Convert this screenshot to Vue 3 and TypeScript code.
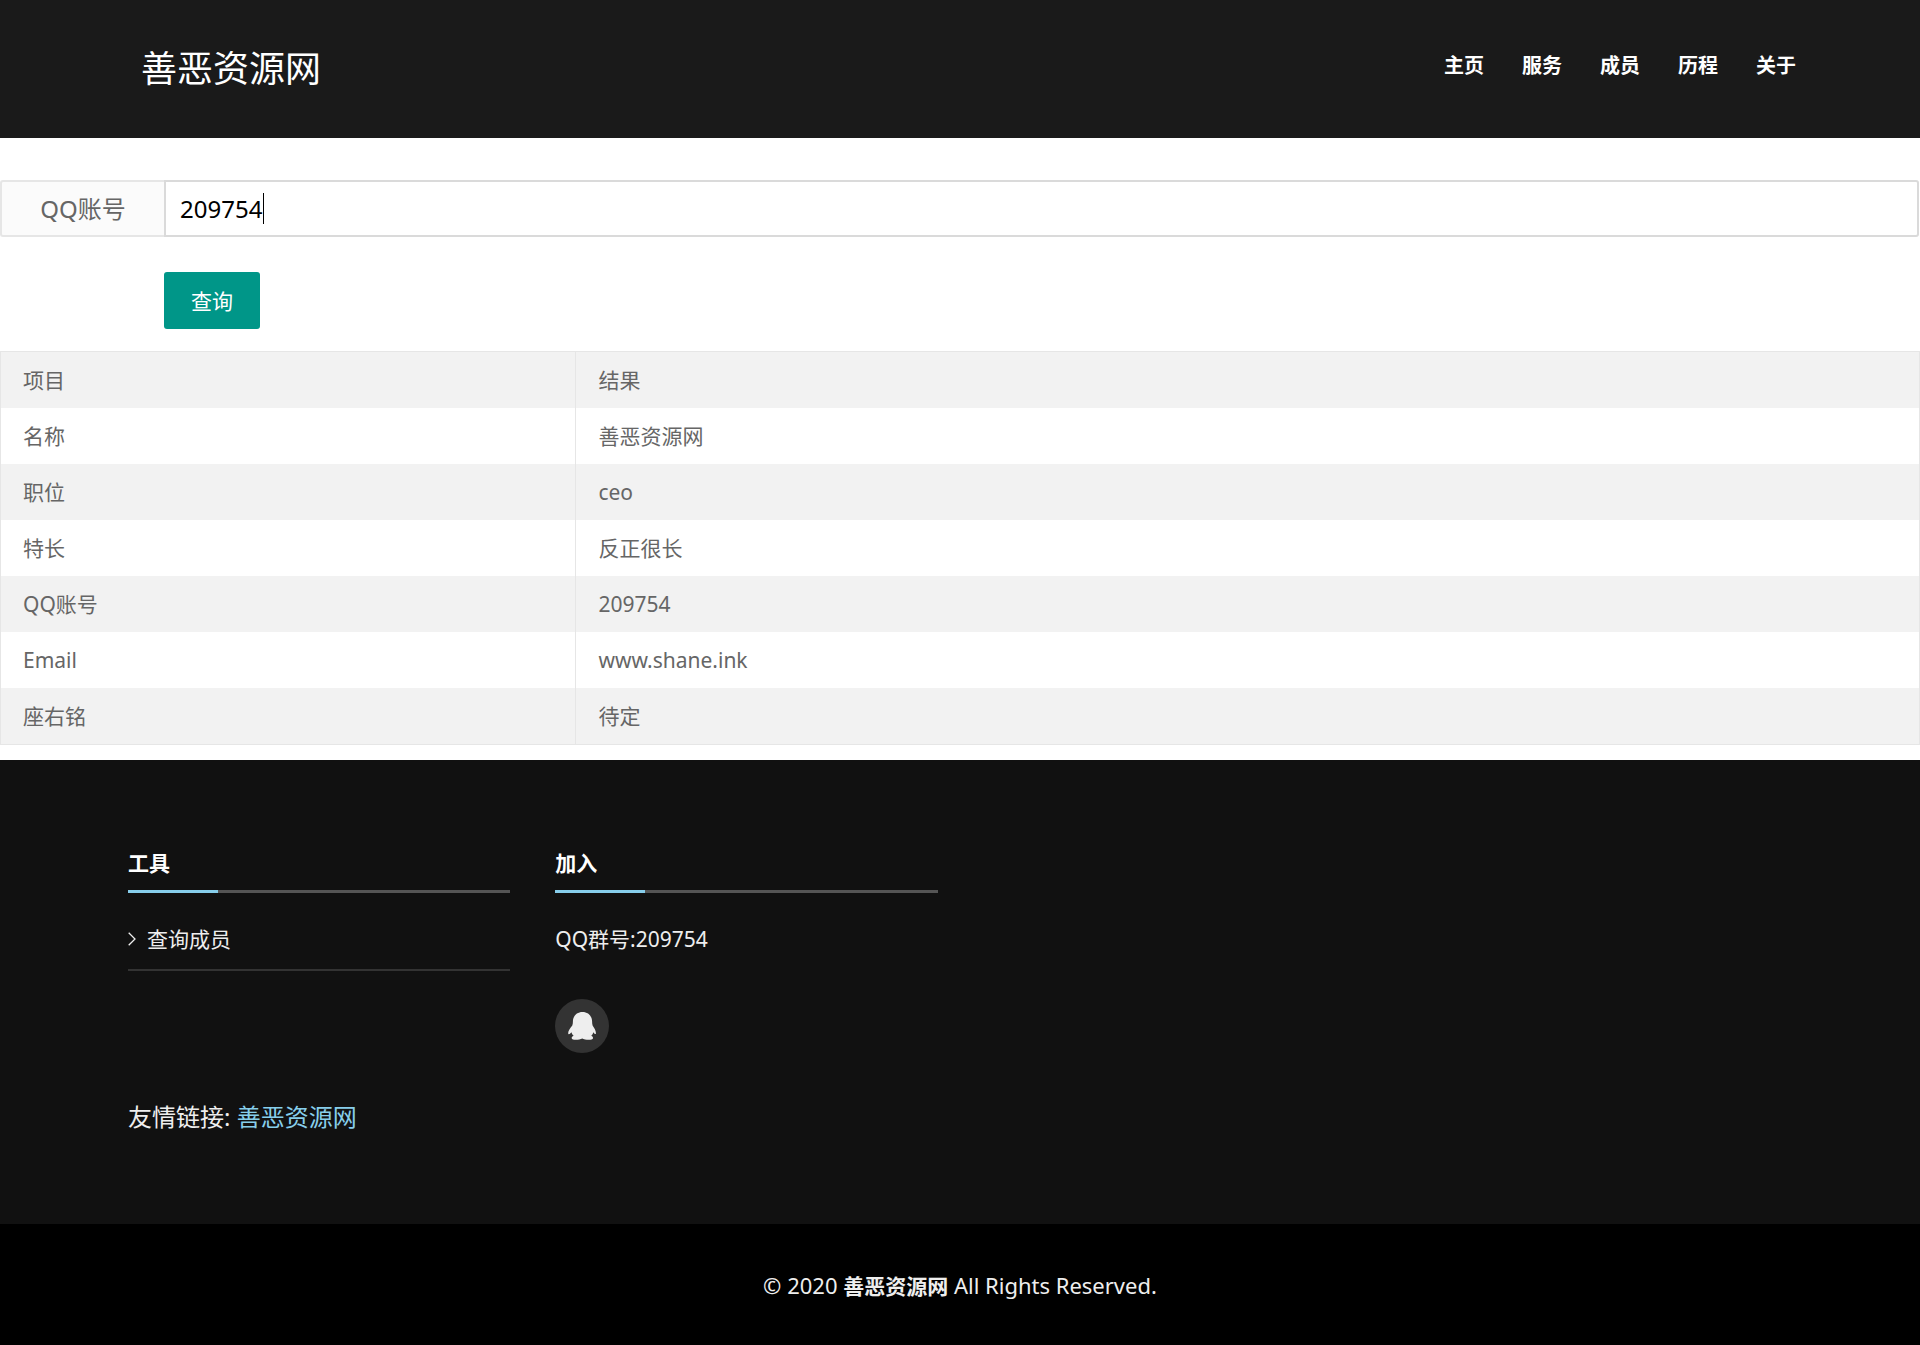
<script setup lang="ts">
import { computed, onMounted, ref } from 'vue'

interface Row {
  label: string
  value: string
}

const siteName = '善恶资源网'
const navItems: string[] = ['主页', '服务', '成员', '历程', '关于']
const initialAccount = '209754'
const account = ref(initialAccount)
const focused = ref(false)
const accountInput = ref<HTMLInputElement | null>(null)
const showCaret = computed(() => focused.value && account.value === initialAccount)

const rows: Row[] = [
  { label: '名称', value: '善恶资源网' },
  { label: '职位', value: 'ceo' },
  { label: '特长', value: '反正很长' },
  { label: 'QQ账号', value: '209754' },
  { label: 'Email', value: 'www.shane.ink' },
  { label: '座右铭', value: '待定' },
]

onMounted(() => {
  const el = accountInput.value
  if (!el) return
  el.focus()
  el.setSelectionRange(el.value.length, el.value.length)
})
</script>

<template>
  <div class="page">
    <header class="header">
      <div class="header-inner">
        <h1 class="brand"><a href="#">{{ siteName }}</a></h1>
        <nav class="nav">
          <a v-for="item in navItems" :key="item" href="#">{{ item }}</a>
        </nav>
      </div>
    </header>

    <main>
      <form class="search" @submit.prevent>
        <div class="field">
          <label for="account">QQ账号</label>
          <div class="control">
            <input
              id="account"
              ref="accountInput"
              v-model="account"
              :class="{ still: showCaret }"
              type="text"
              autocomplete="off"
              @focus="focused = true"
              @blur="focused = false"
            />
            <span v-if="showCaret" class="caret" aria-hidden="true"></span>
          </div>
        </div>
        <button type="submit">查询</button>
      </form>

      <table class="result">
        <thead>
          <tr>
            <th scope="col" class="key">项目</th>
            <th scope="col">结果</th>
          </tr>
        </thead>
        <tbody>
          <tr v-for="row in rows" :key="row.label">
            <td class="key">{{ row.label }}</td>
            <td>{{ row.value }}</td>
          </tr>
        </tbody>
      </table>
    </main>

    <footer class="footer">
      <div class="footer-inner">
        <div class="columns">
          <section>
            <h2>工具</h2>
            <ul class="tools">
              <li>
                <a href="#">
                  <svg width="8" height="14" viewBox="0 0 8 14" aria-hidden="true">
                    <path d="M0.7 0.7 7 7 0.7 13.3" fill="none" stroke="currentColor" stroke-width="1.3" />
                  </svg>
                  <span>查询成员</span>
                </a>
              </li>
            </ul>
          </section>
          <section>
            <h2>加入</h2>
            <p class="group">QQ群号:209754</p>
            <a class="qq" href="#" aria-label="QQ">
              <svg width="28" height="28" viewBox="0 0 28 28" aria-hidden="true">
                <path
                  fill="currentColor"
                  d="M14.5 0C9 0 5 3.8 4.9 9.5C4.9 11 4.8 12.2 4.3 13.4C2 16 0 19 .2 21.4C.4 23 2 22 3.4 20.2C3.8 21.6 4.5 22.8 5.6 23.8C4.2 24.3 3.6 25.2 3.7 26.2C4 28.5 11.5 28 14.2 26.4C16.8 28 24.6 28.5 25 26.2C25.1 25.2 24.6 24.4 23.3 23.8C24.3 22.8 25 21.6 25.4 20.2C26.6 22 27.7 22.8 27.9 21.4C28.1 19 26.4 16 24.6 13.4C24.2 12.2 24.1 11 24.1 9.5C24 3.8 20 0 14.5 0Z"
                />
              </svg>
            </a>
          </section>
        </div>
        <p class="friends">友情链接: <a href="#">{{ siteName }}</a></p>
      </div>
    </footer>
    <div class="copyright">© 2020 <strong>{{ siteName }}</strong> All Rights Reserved.</div>
  </div>
</template>

<style>
body {
  margin: 0;
  background: #fff;
}
</style>

<style scoped>
.page {
  font-family: "Noto Sans", "Noto Sans CJK SC", sans-serif;
  font-size: 21px;
  line-height: 32px;
  color: #666;
}

.page a {
  color: inherit;
  text-decoration: none;
}

h1,
h2,
p,
ul {
  margin: 0;
  padding: 0;
}

.header {
  background: #1a1a1a;
  color: #fff;
}

.header-inner {
  display: flex;
  justify-content: space-between;
  align-items: flex-start;
  max-width: 1655px;
  margin: 0 auto;
  padding: 42px 19px 42px 36px;
}

.brand {
  font-size: 36px;
  font-weight: 400;
  line-height: 54px;
}

.nav {
  display: flex;
  gap: 38px;
  font-size: 20px;
  font-weight: 700;
  line-height: 48px;
}

.search {
  padding: 42px 1px 22px 0;
}

.field {
  display: flex;
  height: 57px;
  margin-bottom: 35px;
}

.field label {
  box-sizing: border-box;
  width: 164px;
  border: 2px solid #e6e6e6;
  border-right: 0;
  border-radius: 3px 0 0 3px;
  background: #fbfbfb;
  font-size: 24px;
  line-height: 53px;
  text-align: center;
}

.control {
  position: relative;
  display: flex;
  flex: 1;
  min-width: 0;
}

.control input {
  box-sizing: border-box;
  flex: 1;
  min-width: 0;
  border: 2px solid #dadada;
  border-radius: 0 3px 3px 0;
  padding: 0 14px;
  outline: 0;
  background: #fff;
  color: #000;
  font-family: inherit;
  font-size: 24px;
}

.control input.still {
  caret-color: transparent;
}

.caret {
  position: absolute;
  top: 13px;
  left: 99px;
  width: 1px;
  height: 31px;
  background: #000;
}

.search button {
  display: block;
  width: 96px;
  height: 57px;
  margin-left: 164px;
  padding: 0 0 2px;
  border: 0;
  border-radius: 3px;
  background: #009688;
  color: #fff;
  font-family: inherit;
  font-size: 21px;
}

.result {
  width: 100%;
  margin-bottom: 15px;
  border: 1px solid #e6e6e6;
  border-collapse: separate;
  border-spacing: 0;
  table-layout: fixed;
}

.result th,
.result td {
  padding: 12px 22px;
  font-weight: 400;
  text-align: left;
}

.result .key {
  box-sizing: border-box;
  width: 30%;
  border-right: 1px solid #e6e6e6;
}

.result thead tr,
.result tbody tr:nth-child(even) {
  background: #f2f2f2;
}

.footer {
  padding: 88px 0 89px;
  background: #111;
  color: #eee;
}

.footer-inner {
  max-width: 1664px;
  margin: 0 auto;
}

.columns {
  display: grid;
  grid-template-columns: repeat(4, 1fr);
  gap: 45px;
}

.columns h2 {
  position: relative;
  margin-bottom: 30px;
  padding-bottom: 12px;
  border-bottom: 3px solid #555;
  color: #fff;
  font-size: 21px;
  line-height: 30px;
}

.columns h2::after {
  content: "";
  position: absolute;
  left: 0;
  bottom: -3px;
  width: 90px;
  height: 3px;
  background: #87ceeb;
}

.tools {
  list-style: none;
}

.tools li {
  padding-bottom: 14px;
  border-bottom: 2px solid #333;
}

.tools a {
  display: flex;
  align-items: center;
  gap: 11px;
}

.group {
  margin-bottom: 44px;
}

.qq {
  display: flex;
  align-items: center;
  justify-content: center;
  width: 54px;
  height: 54px;
  border-radius: 50%;
  background: #333;
}

.friends {
  margin-top: 46px;
  font-size: 24px;
  line-height: 36px;
}

.page .friends a {
  color: #87ceeb;
}

.copyright {
  padding: 45px 0 44px;
  background: #000;
  color: #eee;
  font-size: 22px;
  text-align: center;
}

.copyright strong {
  font-size: 21px;
  line-height: 1;
}
</style>
